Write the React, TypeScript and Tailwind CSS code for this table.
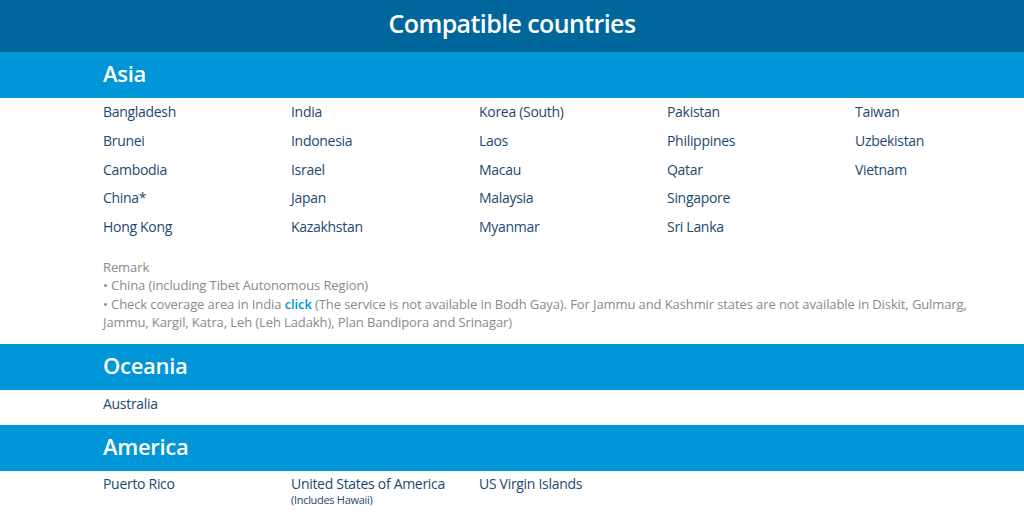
const asia = [
  ["Bangladesh", "India", "Korea (South)", "Pakistan", "Taiwan"],
  ["Brunei", "Indonesia", "Laos", "Philippines", "Uzbekistan"],
  ["Cambodia", "Israel", "Macau", "Qatar", "Vietnam"],
  ["China*", "Japan", "Malaysia", "Singapore", ""],
  ["Hong Kong", "Kazakhstan", "Myanmar", "Sri Lanka", ""],
]

function RegionBar({ title }: { title: string }) {
  return (
    <div className="bg-[#0096d8] h-[46px] flex items-center pl-[103px]">
      <h2 className="text-white text-[22px] font-semibold tracking-[-0.3px] pb-[3px]">{title}</h2>
    </div>
  )
}

export default function App() {
  return (
    <div
      className="w-[1024px] h-[512px] overflow-hidden bg-white"
      style={{ fontFamily: '"Open Sans", "Liberation Sans", sans-serif' }}
    >
      <div className="bg-[#00679c] h-[52px] flex items-center justify-center">
        <h1 className="text-white text-[25px] font-semibold tracking-[-0.6px] pb-[4px]">Compatible countries</h1>
      </div>

      <RegionBar title="Asia" />
      <div className="pl-[103px] pb-[12px]">
        <div className="grid grid-cols-[188px_188px_188px_188px_188px]">
          {asia.flat().map((c, i) => (
            <div key={i} className="h-[28.8px] leading-[28.8px] text-[14px] font-medium text-[#1b4a70] tracking-[-0.3px]">
              {c}
            </div>
          ))}
        </div>
        <div className="mt-[16px] text-[13px] leading-[18.5px] text-[#8a8a8a] tracking-[-0.1px] pr-[40px]">
          <p>Remark</p>
          <p>• China (including Tibet Autonomous Region)</p>
          <p>
            • Check coverage area in India <span className="text-[#0096d8] font-semibold">click</span> (The service is not
            available in Bodh Gaya). For Jammu and Kashmir states are not available in Diskit, Gulmarg, Jammu, Kargil,
            Katra, Leh (Leh Ladakh), Plan Bandipora and Srinagar)
          </p>
        </div>
      </div>

      <RegionBar title="Oceania" />
      <div className="pl-[103px] h-[35px] pt-[3px] text-[14px] font-medium text-[#1b4a70] tracking-[-0.3px]">Australia</div>

      <RegionBar title="America" />
      <div className="pl-[103px] pt-[4px] grid grid-cols-[188px_188px_188px]">
        <div className="text-[14px] leading-[18px] font-medium text-[#1b4a70] tracking-[-0.3px]">Puerto Rico</div>
        <div className="text-[14px] leading-[18px] font-medium text-[#1b4a70] tracking-[-0.3px]">
          United States of America
          <div className="text-[11px] leading-[13px]">(Includes Hawaii)</div>
        </div>
        <div className="text-[14px] leading-[18px] font-medium text-[#1b4a70] tracking-[-0.3px]">US Virgin Islands</div>
      </div>
    </div>
  )
}
